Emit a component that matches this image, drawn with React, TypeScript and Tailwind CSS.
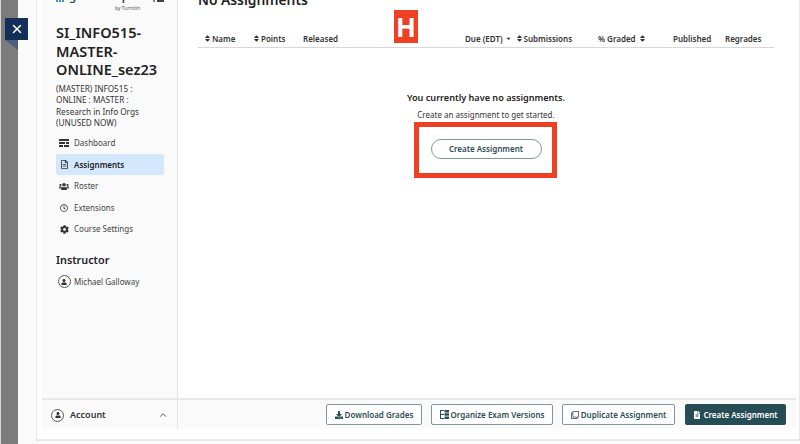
import { ChevronUp, X } from 'lucide-react'
import { FaCaretDown, FaCog, FaDownload, FaFileAlt, FaRegClock, FaRegClone, FaRegFileAlt, FaSort, FaUser, FaUsers } from 'react-icons/fa'

const font = { fontFamily: '"Noto Sans", sans-serif' }

function DashboardIcon() {
  return (
    <svg width="10" height="8" viewBox="0 0 10 8" fill="currentColor">
      <rect x="0" y="0" width="10" height="2" />
      <rect x="0" y="3" width="6" height="2" />
      <rect x="7" y="3" width="3" height="2" />
      <rect x="0" y="6" width="4" height="2" />
      <rect x="5" y="6" width="5" height="2" />
    </svg>
  )
}

function VersionsIcon() {
  return (
    <svg width="9" height="9" viewBox="0 0 9 9" fill="currentColor">
      <rect x="0" y="0" width="4" height="1" />
      <rect x="0" y="0" width="1" height="9" />
      <rect x="0" y="8" width="4" height="1" />
      <rect x="0" y="4" width="4" height="1" />
      <rect x="4.5" y="0" width="4.5" height="2.5" />
      <rect x="4.5" y="3.2" width="4.5" height="2.5" />
      <rect x="4.5" y="6.5" width="4.5" height="2.5" />
    </svg>
  )
}

const nav = [
  { label: 'Dashboard', icon: <DashboardIcon /> },
  { label: 'Assignments', icon: <FaRegFileAlt size={9} />, active: true },
  { label: 'Roster', icon: <FaUsers size={11} /> },
  { label: 'Extensions', icon: <FaRegClock size={8} /> },
  { label: 'Course Settings', icon: <FaCog size={9} /> },
]

function UserBadge() {
  return (
    <span className="flex h-[13px] w-[13px] shrink-0 items-center justify-center rounded-full border border-[#555] text-[#333]">
      <FaUser size={6} />
    </span>
  )
}

function Logo() {
  return (
    <div className="relative h-[14px]">
      <div className="absolute top-0 left-0 flex items-start gap-[1px]">
        <span className="h-[2px] w-[2px] bg-[#4a90d9]" />
        <span className="h-[2px] w-[2px] bg-[#4a90d9]" />
        <span className="h-[2px] w-[2px] bg-[#4a90d9]" />
      </div>
      <span className="absolute -top-[14px] left-[13px] text-[11.5px] leading-[20px] font-semibold tracking-[0.2px] whitespace-nowrap text-[#2c4d55]">
        gradescope
      </span>
      <span className="absolute top-[5px] left-[59px] text-[5px] leading-[6px] whitespace-nowrap text-[#555]">
        by Turnitin
      </span>
      <span className="absolute top-0 left-[97px] h-[2px] w-[2px] bg-[#888]" />
      <span className="absolute top-0 left-[101px] h-[2px] w-[7px] bg-[#444]" />
    </div>
  )
}

function Sidebar() {
  return (
    <aside className="flex w-[136px] shrink-0 flex-col border-r border-[#e6e6e6] bg-[#fafafa]">
      <div className="flex-1 overflow-hidden pr-[13px] pl-[14px]">
        <Logo />
        <h2 className="mt-[9px] text-[14.5px] leading-[18.5px] font-semibold text-[#222]">
          SI_INFO515-
          <br />
          MASTER-
          <br />
          ONLINE_sez23
        </h2>
        <p className="mt-[4.5px] text-[8.2px] leading-[11.4px] text-[#333]">
          (MASTER) INFO515 :
          <br />
          ONLINE : MASTER :
          <br />
          Research in Info Orgs
          <br />
          (UNUSED NOW)
        </p>
        <ul className="mt-[4px] flex flex-col gap-[0.5px]">
          {nav.map((item) => (
            <li
              key={item.label}
              className={`flex h-[21px] items-center gap-[5px] rounded-[2px] pl-[3px] text-[8px] ${
                item.active ? 'bg-[#d3e8fd] font-semibold text-[#222]' : 'text-[#444]'
              }`}
            >
              <span className="flex w-[10px] justify-center text-[#333]">{item.icon}</span>
              {item.label}
            </li>
          ))}
        </ul>
        <h3 className="mt-[13.5px] text-[10.8px] leading-[14px] font-semibold text-[#222]">Instructor</h3>
        <div className="mt-[8px] flex items-center gap-[3.5px] pl-[1.5px] text-[8px] text-[#444]">
          <UserBadge />
          Michael Galloway
        </div>
      </div>
      <div className="flex h-[31px] items-center gap-[6px] border-t-2 border-[#e8e8e8] px-[9px] pt-[1px] text-[9px] font-semibold text-[#333]">
        <UserBadge />
        <span className="flex-1">Account</span>
        <ChevronUp size={10} />
      </div>
    </aside>
  )
}

function HeaderCell({ label, width, sort }: { label: string; width: string; sort?: boolean }) {
  return (
    <span className={`flex items-center gap-[2px] ${width}`}>
      {sort && <FaSort size={9} className="w-[5px] shrink-0" />}
      {label}
    </span>
  )
}

function ActionButton({ icon, label, className }: { icon: React.ReactNode; label: string; className: string }) {
  return (
    <button
      className={`flex h-[21px] items-center justify-center gap-[2px] rounded-[2px] border border-[#7f979b] bg-white text-[8px] font-semibold text-[#2c4d55] ${className}`}
    >
      {icon}
      {label}
    </button>
  )
}

function Main() {
  return (
    <main className="flex min-w-0 flex-1 flex-col">
      <div className="flex-1 pl-[20px]">
        <h1 className="-mt-[10px] h-[20px] text-[13.8px] leading-[20px] font-semibold text-[#222]">No Assignments</h1>
        <div className="mt-[18px] flex h-[20px] w-[576px] items-center border-b border-[#d8d8d8] pt-[2px] pl-[7px] text-[8px] font-semibold text-[#333]">
          <HeaderCell label="Name" width="w-[49px]" sort />
          <HeaderCell label="Points" width="w-[49px]" sort />
          <HeaderCell label="Released" width="w-[162px]" />
          <span className="flex w-[51.5px] items-center gap-[2px]">
            Due (EDT) <FaCaretDown size={7} className="shrink-0" />
          </span>
          <HeaderCell label="Submissions" width="w-[81.5px]" sort />
          <span className="flex w-[75px] items-center gap-[4px]">
            % Graded <FaSort size={9} className="w-[5px] shrink-0" />
          </span>
          <span className="w-[52px]">Published</span>
          <span>Regrades</span>
        </div>
        <div className="mt-[43px] flex w-[576px] flex-col items-center">
          <p className="text-[9.1px] leading-[14px] font-semibold text-[#222]">You currently have no assignments.</p>
          <p className="mt-[4px] text-[8px] leading-[12px] text-[#333]">Create an assignment to get started.</p>
          <button className="mt-[18px] h-[20px] w-[111px] rounded-full border border-[#7f979b] bg-white text-[8px] font-semibold text-[#2c4d55]">
            Create Assignment
          </button>
        </div>
      </div>
      <div className="flex h-[31px] items-center justify-end gap-[9px] border-t-2 border-[#e8e8e8] bg-[#fafafa] pr-[10px]">
        <ActionButton icon={<FaDownload size={8} />} label="Download Grades" className="w-[96px]" />
        <ActionButton icon={<VersionsIcon />} label="Organize Exam Versions" className="w-[122px]" />
        <ActionButton icon={<FaRegClone size={8} />} label="Duplicate Assignment" className="mr-[1px] w-[113px]" />
        <button className="flex h-[21px] w-[101px] items-center justify-center gap-[2px] rounded-[2px] bg-[#264c54] text-[8px] font-semibold text-white">
          <FaFileAlt size={8} />
          Create Assignment
        </button>
      </div>
    </main>
  )
}

export default function App() {
  return (
    <div className="relative flex h-[444px] w-[800px] overflow-hidden bg-white" style={font}>
      <div className="w-[1px] shrink-0 bg-[#d8d8d8]" />
      <div className="w-[17px] shrink-0 bg-[#7c7c7c]" />
      <div className="flex flex-1 bg-[#fafafa] pl-[18px]">
        <div className="flex h-[441px] w-[764px] border-r border-b-2 border-l border-[#e8e8e8] bg-white pr-[3px] pl-[5px]">
          <div className="flex h-[429px] flex-1">
            <Sidebar />
            <Main />
          </div>
        </div>
      </div>
      {/* close tab over the left edge */}
      <div className="absolute top-[18px] left-[5px] flex h-[22px] w-[23px] items-center justify-center bg-[#13305a] text-white">
        <X size={14} strokeWidth={2.5} />
      </div>
      <svg className="absolute top-[40px] left-[5px]" width="13" height="10" viewBox="0 0 13 10">
        <polygon points="0,0 13,0 13,10" fill="#4d5f7c" />
      </svg>
      {/* highlight marker */}
      <div className="absolute top-[10px] left-[394px] flex h-[33px] w-[24px] items-center justify-center bg-[#ee4023] text-[26px] leading-none font-bold text-white">
        H
      </div>
      <div className="absolute top-[122px] left-[414px] h-[56px] w-[143px] border-[5px] border-[#ee4023]" />
    </div>
  )
}
